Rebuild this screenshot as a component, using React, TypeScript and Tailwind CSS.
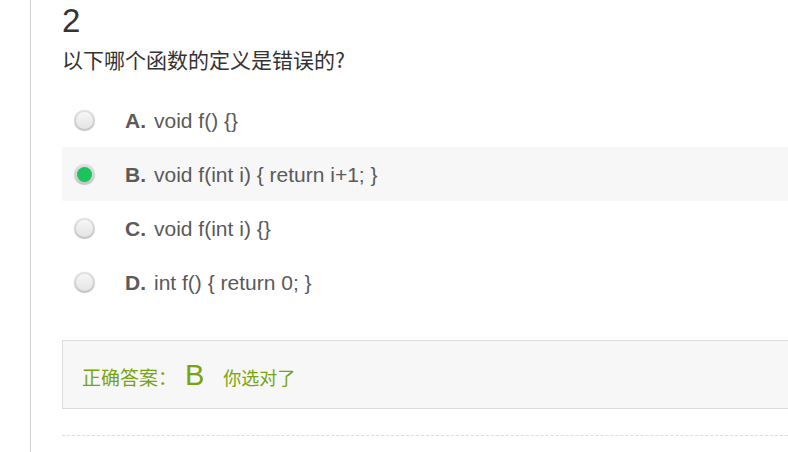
const options = [
  { key: "A", text: "void f() {}" },
  { key: "B", text: "void f(int i) { return i+1; }" },
  { key: "C", text: "void f(int i) {}" },
  { key: "D", text: "int f() { return 0; }" },
];

const selected = "B";

function Radio({ checked }: { checked: boolean }) {
  return (
    <span className="flex h-[21px] w-[21px] items-center justify-center rounded-full bg-[linear-gradient(#e2e2e2,#c4c4c4)] shadow-[0_0_1px_rgba(0,0,0,0.2)]">
      <span
        className={
          checked
            ? "h-[15px] w-[15px] rounded-full bg-[#19c45a]"
            : "h-[17px] w-[17px] rounded-full bg-[linear-gradient(#f6f6f6,#e4e4e4)]"
        }
      />
    </span>
  );
}

export default function App() {
  return (
    <div className="h-[452px] w-[788px] overflow-hidden bg-white font-['Liberation_Sans','Noto_Sans_CJK_SC',sans-serif]">
      <div className="ml-[30px] h-full border-l border-[#d2d2d2] pl-[31px]">
        <div className="pt-[3px] text-[33px] leading-[36px] text-[#333]">2</div>
        <div className="mt-[6px] text-[21px] leading-[28px] text-[#333] font-['Noto_Sans_CJK_SC',sans-serif]">
          以下哪个函数的定义是错误的?
        </div>

        <div className="mt-[20px]">
          {options.map((o) => (
            <div
              key={o.key}
              className={
                "flex h-[54px] items-center pl-[12px] " +
                (o.key === selected ? "bg-[#f7f7f7]" : "")
              }
            >
              <Radio checked={o.key === selected} />
              <span className="ml-[30px] pt-[2px] text-[21px] font-bold text-[#5a5a5a]">{o.key}.</span>
              <span className="ml-[8px] pt-[2px] text-[21px] text-[#5a5a5a]">{o.text}</span>
            </div>
          ))}
        </div>

        <div className="mt-[31px] flex h-[69px] items-center border-y border-l border-[#dcdcdc] bg-[#f7f7f7] pl-[19px] pt-[6px] text-[#78a40e] font-['Noto_Sans_CJK_SC',sans-serif]">
          <span className="text-[19px]">正确答案：</span>
          <span className="ml-[8px] text-[29px] leading-none font-['Liberation_Sans',sans-serif] -mt-[5px]">B</span>
          <span className="ml-[19px] text-[18px]">你选对了</span>
        </div>

        <div className="mt-[26px] border-t border-dashed border-[#dcdcdc]" />
      </div>
    </div>
  );
}
